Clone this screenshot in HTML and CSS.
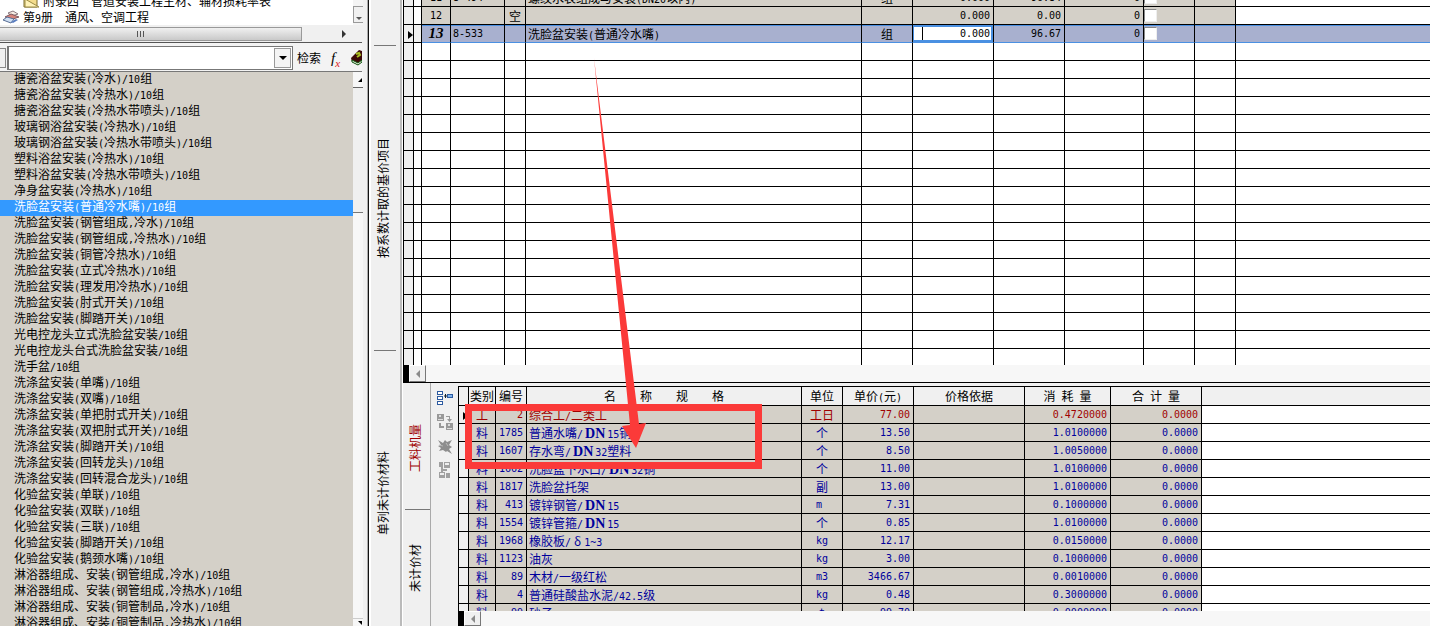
FILE: index.html
```
<!DOCTYPE html>
<html lang="zh-CN">
<head>
<meta charset="utf-8">
<title>安装工程定额</title>
<link rel="stylesheet" href="styles.css">
</head>
<body>
<div class="app">
  <aside class="side">
    <div class="tree">
      <ul class="tree-list">
        <li class="tree-child"><svg class="folder" viewBox="0 0 18 14"><path d="M2 2h6l2 2h5v9H2z" fill="#f3dc8c" stroke="#7a6a2a"/><path d="M3 5l14 8H3z" fill="#fff3b8" stroke="#9a8a45"/></svg><span>附录四　管道安装工程主材、辅材损耗率表</span></li>
        <li class="tree-book"><svg class="books" viewBox="0 0 18 14"><path d="M6 3l5-2 5 3-6 2z" fill="#f6ece4" stroke="#8a7a80"/><path d="M3 7l6-3 8 3-6 2z" fill="#d7837a" stroke="#7d5a60"/><path d="M1 10l4-3 7 2-3 4z" fill="#cfe0f4" stroke="#5a6f96"/><path d="M9 12l5-3 2 1-5 3z" fill="#5a7ec0"/></svg><span>第<span class="n">9</span>册　通风、空调工程</span></li>
      </ul>
      <div class="vbar"><button class="mini" aria-label="向下"><i class="down"></i></button></div>
    </div>
    <div class="hbar"><div class="thumb"><i></i><i></i><i></i></div><button class="flat" aria-label="向右"><i class="right"></i></button></div>
    <div class="search">
      <button class="stub" aria-label="类别"></button>
      <div class="combo"><input type="text" aria-label="检索内容"><button aria-label="展开"><i class="down"></i></button></div>
      <button class="find">检索</button>
      <button class="fx" aria-label="函数"><em>f</em><sub>x</sub></button>
      <button class="book" aria-label="定额书"><svg viewBox="0 0 11 16"><path d="M0 8L8 0l3 1v11l-4 3-6-3z" fill="#3c0808"/><path d="M1 10l6 3 4-3v2l-4 3-6-3z" fill="#e8f0e0" stroke="#145a14"/><path d="M5 4l3-1 1 2-3 2" stroke="#a8c020" fill="none" stroke-width="2"/></svg></button>
    </div>
    <div class="listbox">
      <ul class="items">
        <li>搪瓷浴盆安装<span class="n">(</span>冷水<span class="n">)/10</span>组</li>
        <li>搪瓷浴盆安装<span class="n">(</span>冷热水<span class="n">)/10</span>组</li>
        <li>搪瓷浴盆安装<span class="n">(</span>冷热水带喷头<span class="n">)/10</span>组</li>
        <li>玻璃钢浴盆安装<span class="n">(</span>冷热水<span class="n">)/10</span>组</li>
        <li>玻璃钢浴盆安装<span class="n">(</span>冷热水带喷头<span class="n">)/10</span>组</li>
        <li>塑料浴盆安装<span class="n">(</span>冷热水<span class="n">)/10</span>组</li>
        <li>塑料浴盆安装<span class="n">(</span>冷热水带喷头<span class="n">)/10</span>组</li>
        <li>净身盆安装<span class="n">(</span>冷热水<span class="n">)/10</span>组</li>
        <li class="sel">洗脸盆安装<span class="n">(</span>普通冷水嘴<span class="n">)/10</span>组</li>
        <li>洗脸盆安装<span class="n">(</span>钢管组成<span class="n">,</span>冷水<span class="n">)/10</span>组</li>
        <li>洗脸盆安装<span class="n">(</span>钢管组成<span class="n">,</span>冷热水<span class="n">)/10</span>组</li>
        <li>洗脸盆安装<span class="n">(</span>铜管冷热水<span class="n">)/10</span>组</li>
        <li>洗脸盆安装<span class="n">(</span>立式冷热水<span class="n">)/10</span>组</li>
        <li>洗脸盆安装<span class="n">(</span>理发用冷热水<span class="n">)/10</span>组</li>
        <li>洗脸盆安装<span class="n">(</span>肘式开关<span class="n">)/10</span>组</li>
        <li>洗脸盆安装<span class="n">(</span>脚踏开关<span class="n">)/10</span>组</li>
        <li>光电控龙头立式洗脸盆安装<span class="n">/10</span>组</li>
        <li>光电控龙头台式洗脸盆安装<span class="n">/10</span>组</li>
        <li>洗手盆<span class="n">/10</span>组</li>
        <li>洗涤盆安装<span class="n">(</span>单嘴<span class="n">)/10</span>组</li>
        <li>洗涤盆安装<span class="n">(</span>双嘴<span class="n">)/10</span>组</li>
        <li>洗涤盆安装<span class="n">(</span>单把肘式开关<span class="n">)/10</span>组</li>
        <li>洗涤盆安装<span class="n">(</span>双把肘式开关<span class="n">)/10</span>组</li>
        <li>洗涤盆安装<span class="n">(</span>脚踏开关<span class="n">)/10</span>组</li>
        <li>洗涤盆安装<span class="n">(</span>回转龙头<span class="n">)/10</span>组</li>
        <li>洗涤盆安装<span class="n">(</span>回转混合龙头<span class="n">)/10</span>组</li>
        <li>化验盆安装<span class="n">(</span>单联<span class="n">)/10</span>组</li>
        <li>化验盆安装<span class="n">(</span>双联<span class="n">)/10</span>组</li>
        <li>化验盆安装<span class="n">(</span>三联<span class="n">)/10</span>组</li>
        <li>化验盆安装<span class="n">(</span>脚踏开关<span class="n">)/10</span>组</li>
        <li>化验盆安装<span class="n">(</span>鹅颈水嘴<span class="n">)/10</span>组</li>
        <li>淋浴器组成、安装<span class="n">(</span>钢管组成<span class="n">,</span>冷水<span class="n">)/10</span>组</li>
        <li>淋浴器组成、安装<span class="n">(</span>钢管组成<span class="n">,</span>冷热水<span class="n">)/10</span>组</li>
        <li>淋浴器组成、安装<span class="n">(</span>铜管制品<span class="n">,</span>冷水<span class="n">)/10</span>组</li>
        <li>淋浴器组成、安装<span class="n">(</span>铜管制品<span class="n">,</span>冷热水<span class="n">)/10</span>组</li>
      </ul>
      <div class="vscroll"><button class="up" aria-label="向上"><i></i></button><div class="vthumb"></div><div class="track"></div><button class="dn" aria-label="向下"><i></i></button></div>
    </div>
  </aside>
  <div class="splitter"></div>
  <nav class="tabs outer">
    <button class="t0" aria-label="定额项目"></button>
    <button class="t1"><span>按系数计取的基价项目</span></button>
    <button class="t2"><span>单列未计价材料</span></button>
  </nav>
  <main class="main">
    <section class="upper">
      <div class="grid-wrap">
        <table class="grid top">
          <colgroup><col class="w10"><col class="w8"><col class="w29"><col class="w54"><col class="w21"><col class="w336"><col class="w51"><col class="w81"><col class="w71"><col class="w79"><col class="w51"><col class="w41"><col></colgroup>
          <tbody>
            <tr class="filled"><td></td><td></td><td class="num c">11</td><td class="num l">8-494</td><td></td><td>螺纹水表组成与安装<span class="n">(DN20</span>以内<span class="n">)</span></td><td class="c">组</td><td class="num">0.000</td><td class="num">96.84</td><td class="num">0</td><td class="chk"><input type="checkbox" aria-label="选择 11"></td><td></td><td></td></tr>
            <tr class="filled"><td></td><td></td><td class="num c">12</td><td></td><td class="c">空</td><td></td><td></td><td class="num">0.000</td><td class="num">0.00</td><td class="num">0</td><td class="chk"><input type="checkbox" aria-label="选择 12"></td><td></td><td></td></tr>
            <tr class="current"><td><i class="mark"></i></td><td></td><td class="c serial">13</td><td class="num l">8-533</td><td></td><td>洗脸盆安装<span class="n">(</span>普通冷水嘴<span class="n">)</span></td><td class="c">组</td><td class="edit"><div class="field"><i></i><input type="text" value="0.000" aria-label="工程量"></div></td><td class="num">96.67</td><td class="num">0</td><td class="chk"><input type="checkbox" aria-label="选择 13"></td><td></td><td></td></tr>
            <tr><td></td><td></td><td></td><td></td><td></td><td></td><td></td><td></td><td></td><td></td><td></td><td></td><td></td></tr>
            <tr><td></td><td></td><td></td><td></td><td></td><td></td><td></td><td></td><td></td><td></td><td></td><td></td><td></td></tr>
            <tr><td></td><td></td><td></td><td></td><td></td><td></td><td></td><td></td><td></td><td></td><td></td><td></td><td></td></tr>
            <tr><td></td><td></td><td></td><td></td><td></td><td></td><td></td><td></td><td></td><td></td><td></td><td></td><td></td></tr>
            <tr><td></td><td></td><td></td><td></td><td></td><td></td><td></td><td></td><td></td><td></td><td></td><td></td><td></td></tr>
            <tr><td></td><td></td><td></td><td></td><td></td><td></td><td></td><td></td><td></td><td></td><td></td><td></td><td></td></tr>
            <tr><td></td><td></td><td></td><td></td><td></td><td></td><td></td><td></td><td></td><td></td><td></td><td></td><td></td></tr>
            <tr><td></td><td></td><td></td><td></td><td></td><td></td><td></td><td></td><td></td><td></td><td></td><td></td><td></td></tr>
            <tr><td></td><td></td><td></td><td></td><td></td><td></td><td></td><td></td><td></td><td></td><td></td><td></td><td></td></tr>
            <tr><td></td><td></td><td></td><td></td><td></td><td></td><td></td><td></td><td></td><td></td><td></td><td></td><td></td></tr>
            <tr><td></td><td></td><td></td><td></td><td></td><td></td><td></td><td></td><td></td><td></td><td></td><td></td><td></td></tr>
            <tr><td></td><td></td><td></td><td></td><td></td><td></td><td></td><td></td><td></td><td></td><td></td><td></td><td></td></tr>
            <tr><td></td><td></td><td></td><td></td><td></td><td></td><td></td><td></td><td></td><td></td><td></td><td></td><td></td></tr>
            <tr><td></td><td></td><td></td><td></td><td></td><td></td><td></td><td></td><td></td><td></td><td></td><td></td><td></td></tr>
            <tr><td></td><td></td><td></td><td></td><td></td><td></td><td></td><td></td><td></td><td></td><td></td><td></td><td></td></tr>
            <tr><td></td><td></td><td></td><td></td><td></td><td></td><td></td><td></td><td></td><td></td><td></td><td></td><td></td></tr>
            <tr><td></td><td></td><td></td><td></td><td></td><td></td><td></td><td></td><td></td><td></td><td></td><td></td><td></td></tr>
            <tr><td></td><td></td><td></td><td></td><td></td><td></td><td></td><td></td><td></td><td></td><td></td><td></td><td></td></tr>
          </tbody>
        </table>
      </div>
      <div class="hscroll"><div class="block"></div><button aria-label="向左"><i class="left"></i></button></div>
    </section>
    <section class="lower">
      <nav class="tabs inner">
        <button class="on"><span>工料机量</span></button>
        <button class="off"><span>未计价材</span></button>
      </nav>
      <div class="tools">
        <button aria-label="插入"><svg viewBox="0 0 18 16"><g fill="#fff" stroke="#2c5aa0"><rect x="1.5" y="1.5" width="5" height="3"/><rect x="1.5" y="6.5" width="5" height="3"/><rect x="1.5" y="11.5" width="5" height="3"/><rect x="11.5" y="4.5" width="5" height="3" fill="#7fb2ea"/></g><path d="M8 6h3M9.5 4v4" stroke="#123"/></svg></button>
        <button aria-label="替换"><svg viewBox="0 0 18 16"><g fill="#999"><path d="M1 0h7v7H1zM10 9h7v7h-7z"/><path d="M10 2h4v3h2l-2.5 3L11 5h2V3h-3zM3 9h2v3h3v2H3z"/></g><g fill="#ddd"><path d="M3 1h2v2H3zM12 10h2v2h-2zM2 5h5v1H2zM11 14h5v1h-5z"/></g></svg></button>
        <button aria-label="删除"><svg viewBox="0 0 18 16"><path d="M2 2l5 3 2-3 2 2 5-2-3 5 3 2-3 2 3 5-5-3-1 1-3-2-4 1 2-3-3-2 3-1z" fill="#8e8e8e"/><path d="M3 7l4 1M10 5l2 3" stroke="#bbb"/></svg></button>
        <button aria-label="结构"><svg viewBox="0 0 18 16"><path d="M3 0h4v5H3zM8 0h6v6H8zM3 10h6v6H3zM10 11h4v5h-4zM5 5h2v5H5zM7 7h4v2H7z" fill="#a0a0a0"/><path d="M9 1h4v2H9zM4 11h4v2H4z" fill="#eee"/></svg></button>
      </div>
      <div class="detail">
        <div class="grid-wrap">
          <table class="grid bottom">
            <colgroup><col class="w10"><col class="w27"><col class="w31"><col class="w275"><col class="w41"><col class="w71"><col class="w111"><col class="w86"><col class="w91"><col></colgroup>
            <thead><tr><th></th><th>类别</th><th>编号</th><th>名　　称　　规　　格</th><th>单位</th><th>单价<span class="n">(</span>元<span class="n">)</span></th><th>价格依据</th><th>消<span class="n"> </span>耗<span class="n"> </span>量</th><th>合<span class="n"> </span>计<span class="n"> </span>量</th><th></th></tr></thead>
            <tbody>
              <tr class="labor"><td><i class="mark"></i></td><td class="c">工</td><td class="num">2</td><td>综合工<span class="n">/</span>二类工</td><td class="c">工日</td><td class="num">77.00</td><td></td><td class="num">0.4720000</td><td class="num">0.0000</td><td></td></tr>
              <tr><td></td><td class="c">料</td><td class="num">1785</td><td>普通水嘴<span class="n">/</span><b>DN</b><span class="n">15</span>铜</td><td class="c">个</td><td class="num">13.50</td><td></td><td class="num">1.0100000</td><td class="num">0.0000</td><td></td></tr>
              <tr><td></td><td class="c">料</td><td class="num">1607</td><td>存水弯<span class="n">/</span><b>DN</b><span class="n">32</span>塑料</td><td class="c">个</td><td class="num">8.50</td><td></td><td class="num">1.0050000</td><td class="num">0.0000</td><td></td></tr>
              <tr><td></td><td class="c">料</td><td class="num">1662</td><td>洗脸盆下水口<span class="n">/</span><b>DN</b><span class="n">32</span>铜</td><td class="c">个</td><td class="num">11.00</td><td></td><td class="num">1.0100000</td><td class="num">0.0000</td><td></td></tr>
              <tr><td></td><td class="c">料</td><td class="num">1817</td><td>洗脸盆托架</td><td class="c">副</td><td class="num">13.00</td><td></td><td class="num">1.0100000</td><td class="num">0.0000</td><td></td></tr>
              <tr><td></td><td class="c">料</td><td class="num">413</td><td>镀锌钢管<span class="n">/</span><b>DN</b><span class="n">15</span></td><td class="num c">m&nbsp;</td><td class="num">7.31</td><td></td><td class="num">0.1000000</td><td class="num">0.0000</td><td></td></tr>
              <tr><td></td><td class="c">料</td><td class="num">1554</td><td>镀锌管箍<span class="n">/</span><b>DN</b><span class="n">15</span></td><td class="c">个</td><td class="num">0.85</td><td></td><td class="num">1.0100000</td><td class="num">0.0000</td><td></td></tr>
              <tr><td></td><td class="c">料</td><td class="num">1968</td><td>橡胶板<span class="n">/</span><span class="delta">δ</span><span class="n">1~3</span></td><td class="num c">kg</td><td class="num">12.17</td><td></td><td class="num">0.0150000</td><td class="num">0.0000</td><td></td></tr>
              <tr><td></td><td class="c">料</td><td class="num">1123</td><td>油灰</td><td class="num c">kg</td><td class="num">3.00</td><td></td><td class="num">0.1000000</td><td class="num">0.0000</td><td></td></tr>
              <tr><td></td><td class="c">料</td><td class="num">89</td><td>木材<span class="n">/</span>一级红松</td><td class="num c">m3</td><td class="num">3466.67</td><td></td><td class="num">0.0010000</td><td class="num">0.0000</td><td></td></tr>
              <tr><td></td><td class="c">料</td><td class="num">4</td><td>普通硅酸盐水泥<span class="n">/42.5</span>级</td><td class="num c">kg</td><td class="num">0.48</td><td></td><td class="num">0.3000000</td><td class="num">0.0000</td><td></td></tr>
              <tr><td></td><td class="c">料</td><td class="num">99</td><td>砂子</td><td class="num c">t</td><td class="num">99.70</td><td></td><td class="num">0.0000000</td><td class="num">0.0000</td><td></td></tr>
            </tbody>
          </table>
        </div>
        <div class="hscroll"><div class="block"></div><button aria-label="向左"><i class="left"></i></button></div>
      </div>
    </section>
  </main>
  <svg class="note" viewBox="0 0 300 415" aria-hidden="true"><path d="M0 349h297v65H0zM7 356v51h283v-51z" fill="#fb3a39" fill-rule="evenodd"/><path d="M129 3L174 369l7-1-10 25-14-22 8-1z" fill="#fb3a39"/></svg>
</div>
</body>
</html>
```
FILE: styles.css
```
* { box-sizing: border-box; }

body {
  margin: 0;
  font: 12px/16px "Noto Sans CJK SC", sans-serif;
  color: #000;
  background: #f0f0f0;
}

button {
  margin: 0;
  padding: 0;
  border: 0;
  background: none;
  font: inherit;
  color: inherit;
}

ul { list-style: none; margin: 0; padding: 0; }

.n {
  font-family: "DejaVu Sans Mono", monospace;
  font-size: 10px;
  line-height: 0;
  white-space: pre;
}

.app {
  position: relative;
  display: grid;
  grid-template-columns: 363px 10px 30px 1fr;
  height: 100vh;
  overflow: hidden;
}

.side, .main, .detail { display: flex; flex-direction: column; min-width: 0; min-height: 0; }

/* catalogue tree */
.tree { display: flex; height: 25px; overflow: hidden; background: #fff; }
.tree-list { flex: 1; margin-top: -7px; white-space: nowrap; }
.tree-list li { display: flex; height: 16px; align-items: center; }
.tree-child { padding-left: 22px; gap: 3px; }
.tree-book { padding-left: 2px; gap: 3px; }
.folder, .books { width: 18px; height: 14px; }
.vbar { display: flex; align-items: flex-end; width: 10px; background: #f4f4f4; }
.mini { width: 10px; height: 17px; margin-bottom: 2px; border: 1px solid #999; border-right: 0; background: #f0f0f0; }

.down, .right, .left { display: inline-block; border: 4px solid transparent; }
.down { border-top-color: #000; border-bottom: 0; }
.mini .down { border-width: 3px 3px 0; border-top-color: #555; }
.right { border-left-color: #333; border-right: 0; }
.left { border-right-color: #8a8a8a; border-left: 0; }

.hbar { display: flex; align-items: center; height: 17px; background: #f0f0f0; }
.thumb {
  display: flex;
  justify-content: center;
  gap: 2px;
  width: 302px;
  height: 14px;
  padding: 3px 20px 0 0;
  border: 1px solid #999;
  border-left: 0;
  background: linear-gradient(#f0f0f0, #c9c9c9);
}
.thumb i { width: 1px; height: 6px; background: #555; }
.flat { display: flex; align-items: center; width: 16px; height: 14px; margin-left: 40px; }

.search {
  display: flex;
  align-items: center;
  height: 30px;
  margin-right: 1px;
  padding-top: 2px;
  border-top: 1px solid #555;
  border-bottom: 1px solid #777;
  background: #f3f3f3;
}
.stub { width: 6px; height: 20px; border: 1px solid #888; border-left: 0; background: #f0f0f0; }
.combo { display: flex; width: 286px; height: 24px; margin-left: 1px; border: 1px solid #777; border-left-width: 2px; background: #fff; }
.combo input { flex: 1; min-width: 0; border: 0; padding: 0 4px; background: none; font: inherit; }
.combo button { display: flex; align-items: center; justify-content: center; width: 17px; margin: 1px; border: 1px solid #999; background: #f4f4f4; }
.find { margin-left: 4px; }
.fx { margin-left: 10px; font: 15px/16px "Liberation Serif", serif; }
.fx sub { font-size: 11px; font-style: italic; line-height: 0; color: #d22; }
.book { display: flex; margin-left: auto; }
.book svg { width: 11px; height: 16px; }

/* item list */
.listbox { display: flex; flex: 1; min-height: 0; }
.items { flex: 1; background: #d4d0c8; white-space: nowrap; }
.items li { height: 16px; padding-left: 14px; line-height: 12px; }
.items .sel { background: #39f; color: #fff; }
.vscroll { display: flex; flex-direction: column; width: 10px; background: #f7f7f7; }
.vscroll button { display: flex; align-items: center; justify-content: flex-end; height: 16px; padding-right: 1px; }
.vscroll i { border: 0 solid transparent; }
.vscroll .up { border-bottom: 1px solid #666; }
.up i { border-width: 0 0 4px 4px; border-bottom-color: #000; }
.dn i { border-width: 4px 0 0 4px; border-top-color: #000; }
.vthumb { height: 125px; border-bottom: 1px solid #777; background: #f0f0f0; }
.track { flex: 1; }
.vscroll .dn { height: 8px; border-top: 1px solid #ccc; }

.splitter { margin-left: 4px; border-left: 1px solid #aaa; box-shadow: inset 1px 0 #111, inset 3px 0 #fff; }

/* vertical tabs */
.tabs { display: flex; flex-direction: column; background: #f0f0f0; }
.tabs button { display: flex; align-items: center; justify-content: center; border-bottom: 1px solid #777; min-height: 0; }
.tabs button:last-child { border-bottom: 0; }
.tabs span { writing-mode: vertical-rl; text-orientation: sideways; transform: rotate(180deg); white-space: nowrap; }
.outer { padding-right: 2px; border-right: 1px solid #fff; box-shadow: inset -2px 0 #bbb; }
.outer button { margin: 0 4px 0 1px; padding-right: 4px; }
.t0 { flex: 46 1 0; }
.t1 { flex: 309 1 0; }
.outer .t2 { flex: 271 1 0; padding-top: 8px; }
.inner { width: 28px; padding: 3px 0 0 2px; border-right: 1px solid #aaa; }
.inner button { padding-right: 6px; }
.on { flex: 123 1 0; color: #a00000; }
.off { flex: 117 1 0; }

/* grids */
.upper { display: flex; flex-direction: column; flex: 383 1 0; min-height: 0; border-bottom: 1px solid #000; }
.lower { display: flex; flex: 243 1 0; min-height: 0; }
.grid-wrap { flex: 1; min-height: 0; overflow: hidden; background: #fff; }
.grid { width: 100%; table-layout: fixed; border-collapse: separate; border-spacing: 0; border-left: 1px solid #000; }
.grid td, .grid th {
  height: 18px;
  padding: 0 3px 0 2px;
  border: 0 solid #000;
  border-width: 0 1px 1px 0;
  line-height: 17px;
  font-weight: 400;
  white-space: nowrap;
}
.grid td:first-child { padding: 0; background: #f0f0f0; }
.grid td:last-child, .grid th:last-child { border-right: 0; }
.grid .num { font-family: "DejaVu Sans Mono", monospace; font-size: 10px; text-align: right; }
.grid .c { text-align: center; padding: 0; }
.grid .l { text-align: left; }
.mark { display: block; width: 5px; margin: 2px 0 0 auto; border: 4px solid transparent; border-left: 5px solid #000; border-right: 0; }

.top { margin-top: -11px; }
.filled td { background: #d4d0c8; }
.grid .filled td:nth-child(2), .grid .filled td:last-child { background: #fff; }
.current td { background: #a8b0cf; border-bottom-color: #4a90e2; box-shadow: inset 0 1px #4a90e2; }
.grid .current td:nth-child(-n+2) { background: #f0f0f0; border-bottom-color: #000; box-shadow: none; }
.grid .serial { font: italic bold 15px/17px "Liberation Serif", serif; }
.grid .edit { padding: 0; }
.field { display: flex; align-items: center; height: 17px; border: 2px solid #4a90e2; border-left-width: 1px; background: #fff; }
.field i { width: 1px; height: 13px; margin-left: 8px; background: #000; }
.field input { flex: 1; min-width: 0; height: 13px; padding: 0 1px 0 0; border: 0; background: none; font: 10px "DejaVu Sans Mono", monospace; text-align: right; }
.grid .chk { padding: 0; }
.chk input { display: block; appearance: none; width: 13px; height: 13px; margin: 0; border: 1px solid #eee; border-top-color: #888; border-left-color: #888; background: #fff; }

.bottom th { height: 20px; padding: 0; border-top-width: 1px; background: #f0f0f0; line-height: 18px; }
.bottom td { background: #d4d0c8; color: #00009c; }
.bottom td:last-child { background: #fff; }
.bottom .labor td { color: #a00000; }
.bottom b { padding: 0 2px; font: bold 14px/0 "Liberation Serif", serif; }
.delta { padding: 0 3px; line-height: 0; }

.w8 { width: 8px; } .w10 { width: 10px; } .w21 { width: 21px; } .w27 { width: 27px; }
.w29 { width: 29px; } .w31 { width: 31px; } .w41 { width: 41px; } .w51 { width: 51px; }
.w54 { width: 54px; } .w71 { width: 71px; } .w79 { width: 79px; } .w81 { width: 81px; }
.w86 { width: 86px; } .w91 { width: 91px; } .w111 { width: 111px; } .w275 { width: 275px; } .w336 { width: 336px; }

.hscroll { display: flex; height: 17px; background: #f7f7f7; }
.hscroll .block { width: 6px; background: #000; }
.hscroll button { display: flex; align-items: center; justify-content: center; width: 17px; border: 1px solid #fff; border-right-color: #777; border-bottom-color: #777; background: #f0f0f0; }
.detail { flex: 1; padding-top: 3px; }
.detail .hscroll { height: 15px; }

.tools { display: flex; flex-direction: column; align-items: center; gap: 8px; width: 27px; padding-top: 7px; }
.tools button { display: flex; }
.tools svg { width: 18px; height: 16px; }

/* annotation over both grids */
.note { position: absolute; left: 465px; top: 55px; width: 300px; height: 415px; pointer-events: none; }
```
